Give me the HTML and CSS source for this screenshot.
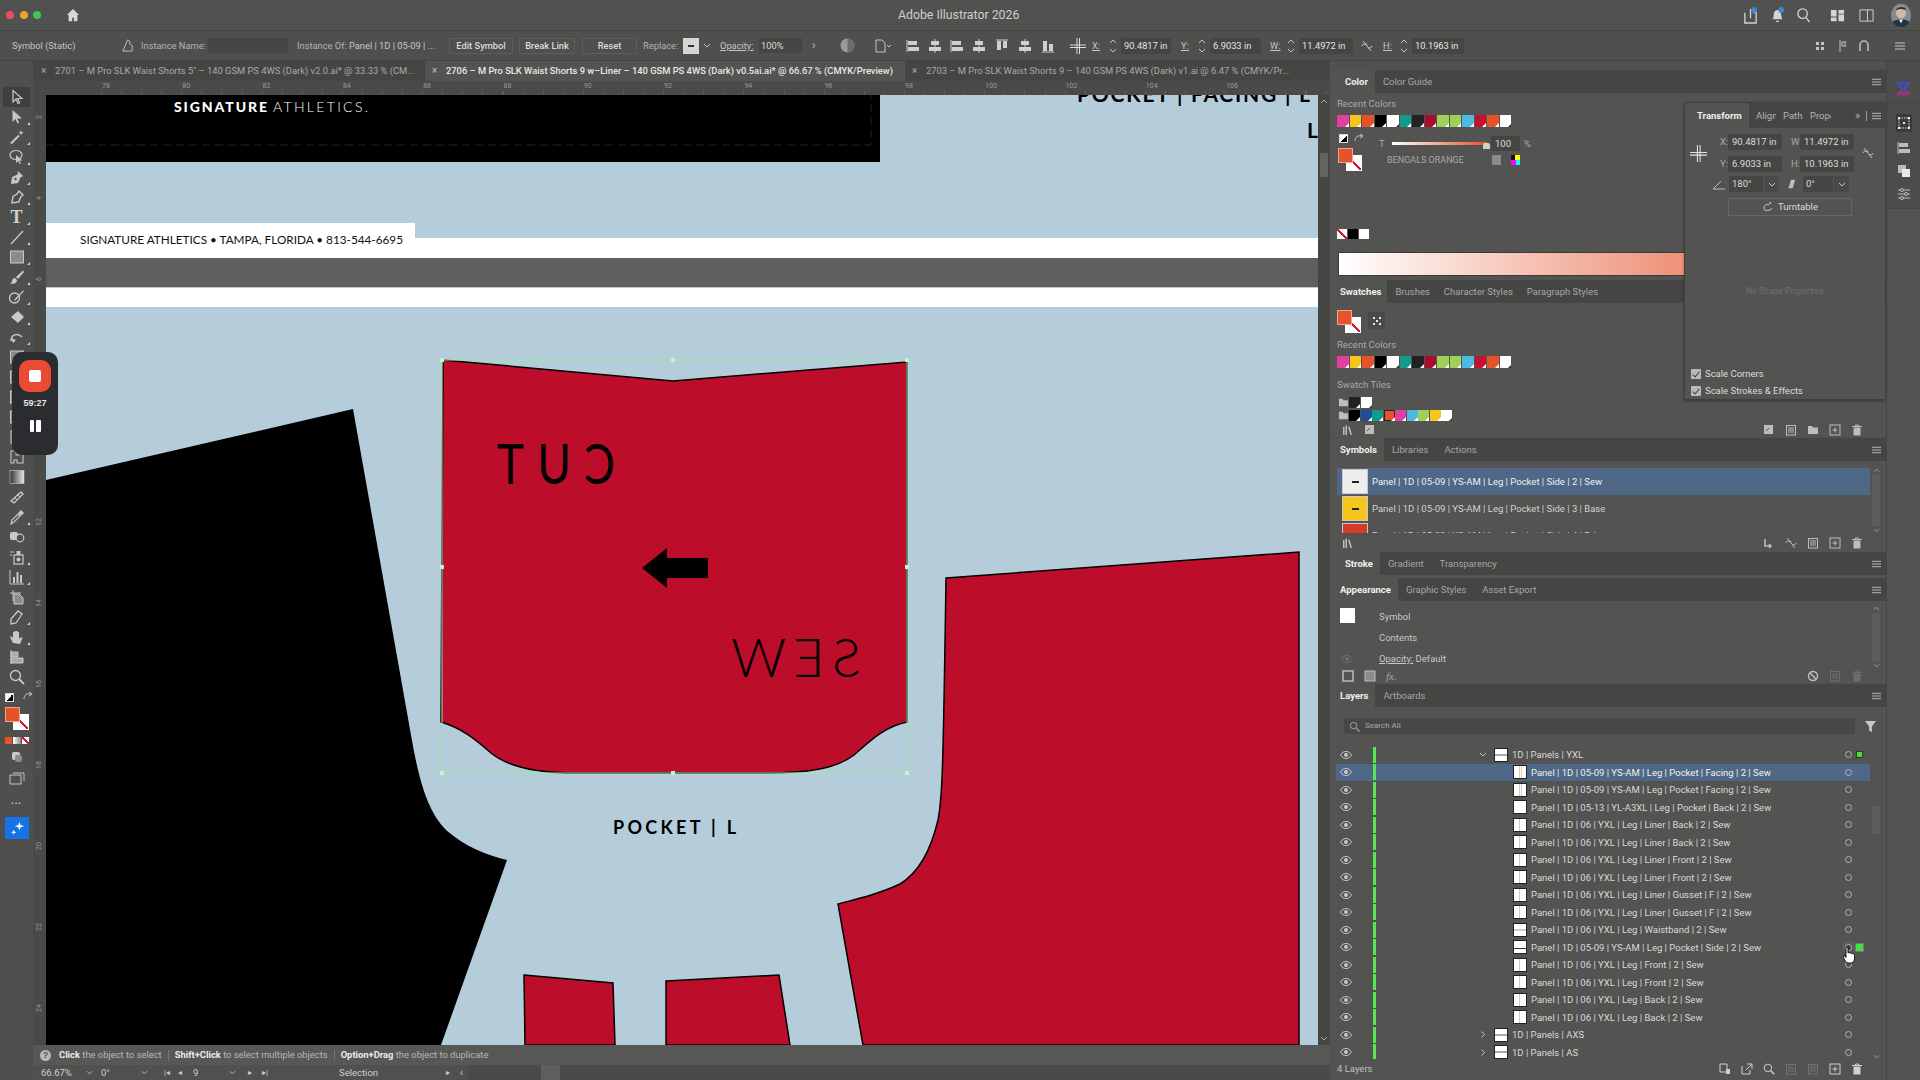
FILE: index.html
```html
<!DOCTYPE html>
<html lang="en">
<head>
<meta charset="utf-8">
<title>Adobe Illustrator 2026</title>
<link rel="stylesheet" href="styles.css">
</head>
<body>
<svg class="sprite" width="0" height="0" aria-hidden="true">
  <symbol id="i-sel" viewBox="0 0 16 16"><path d="M4 1.500V13l3-3 2 4.500 1.600-.8-2-4.200H13z" fill="none" stroke="currentColor" stroke-width="1.200"/></symbol>
  <symbol id="i-dir" viewBox="0 0 16 16"><path d="M3.500 1V13l3-3 2 4.500 1.600-.8-2-4.200H13z" fill="currentColor"/></symbol>
  <symbol id="i-wand" viewBox="0 0 16 16"><path d="M2 14.500 10 6.500" stroke="currentColor" stroke-width="2"/><path d="M12 1l.7 2 2 .7-2 .7-.7 2-.7-2-2-.7 2-.7z" fill="currentColor"/></symbol>
  <symbol id="i-lasso" viewBox="0 0 16 16"><ellipse cx="7" cy="6" rx="6" ry="4.500" fill="none" stroke="currentColor" stroke-width="1.200"/><path d="M7 6v8l2.200-2 1.600 3 1.200-.6-1.500-3h3z" fill="currentColor"/></symbol>
  <symbol id="i-pen" viewBox="0 0 16 16"><path d="M9 2l5 5-2.500 1.500L9 14l-7 1 1-7 5.500-2.500z" fill="currentColor"/><circle cx="6.500" cy="10" r="1.200" fill="#4f4f4d"/></symbol>
  <symbol id="i-curve" viewBox="0 0 16 16"><path d="M10 2l4 4-2 1.500L9.500 13 3 14l1-6.500L8 5z" fill="none" stroke="currentColor" stroke-width="1.400"/></symbol>
  <symbol id="i-line" viewBox="0 0 16 16"><path d="M2 15 14 2" stroke="currentColor" stroke-width="1.300"/></symbol>
  <symbol id="i-rect" viewBox="0 0 16 16"><rect x="1.500" y="2" width="13" height="12" fill="#8b8b89" stroke="currentColor" stroke-width="1"/></symbol>
  <symbol id="i-brush" viewBox="0 0 16 16"><path d="M14 1.500 7 8l2 2 6-7zM6 9c-2 0-3 1.500-3 3s-1 2-2 2.500c3 1 7 0 7-3.500z" fill="currentColor"/></symbol>
  <symbol id="i-shaper" viewBox="0 0 16 16"><circle cx="5.500" cy="9" r="5" fill="none" stroke="currentColor" stroke-width="1.300"/><path d="M15 2 7 11l-2 1 .8-2L14 1.500z" fill="currentColor"/></symbol>
  <symbol id="i-erase" viewBox="0 0 16 16"><path d="M9 2l6 6-6 6-7-6z" fill="currentColor"/></symbol>
  <symbol id="i-rot" viewBox="0 0 16 16"><path d="M2 12C2 6 8 3 13 8" fill="none" stroke="currentColor" stroke-width="1.500"/><path d="M2 9l2 5 3-3z" fill="currentColor"/></symbol>
  <symbol id="i-warp" viewBox="0 0 16 16"><path d="M2 2h5v4h3V3l4 2v9H8v-3H5v3H2z" fill="none" stroke="currentColor" stroke-width="1.100"/></symbol>
  <symbol id="i-grad" viewBox="0 0 16 16"><defs><linearGradient id="gd"><stop offset="0" stop-color="#333"/><stop offset="1" stop-color="#e8e8e8"/></linearGradient></defs><rect x="1" y="1.500" width="14" height="13" fill="url(#gd)" stroke="currentColor" stroke-width=".6"/></symbol>
  <symbol id="i-mesh" viewBox="0 0 16 16"><path d="M2 12 12 3l2 2-9 9z" fill="none" stroke="currentColor" stroke-width="1.300"/><path d="M5 8l3 3M8 5l3 3" stroke="currentColor"/></symbol>
  <symbol id="i-drop" viewBox="0 0 16 16"><path d="M2 15l1-4 6-6 2 2-6 6z" fill="none" stroke="currentColor" stroke-width="1.200"/><path d="M9 4l3-3 3 3-3 3z" fill="currentColor"/></symbol>
  <symbol id="i-blend" viewBox="0 0 16 16"><rect x="1" y="3" width="8" height="8" rx="2" fill="currentColor"/><circle cx="11" cy="9" r="3.800" fill="#4f4f4d" stroke="currentColor" stroke-width="1.200"/></symbol>
  <symbol id="i-spray" viewBox="0 0 16 16"><rect x="5" y="6" width="9" height="9" fill="none" stroke="currentColor" stroke-width="1.200"/><circle cx="9.500" cy="10.500" r="2" fill="currentColor"/><rect x="7.500" y="2" width="4" height="4" fill="currentColor"/><path d="M1 3h4M1 6h2" stroke="currentColor"/></symbol>
  <symbol id="i-chart" viewBox="0 0 16 16"><path d="M1 1v14h14" fill="none" stroke="currentColor"/><path d="M4 14V8h2v6zM7.500 14V3h2v11zM11 14V6h2v8z" fill="currentColor"/></symbol>
  <symbol id="i-board" viewBox="0 0 16 16"><path d="M1 4h11M4 1v11" stroke="currentColor"/><path d="M5 5h5l4 4v6H5z" fill="#8b8b89" stroke="currentColor"/></symbol>
  <symbol id="i-slice" viewBox="0 0 16 16"><path d="M2 15V10L9 2l4 3-6 9z" fill="none" stroke="currentColor" stroke-width="1.300"/></symbol>
  <symbol id="i-hand" viewBox="0 0 16 16"><path d="M4 14 1 8l1-1 2 2V3h1.500v5-6H7v6-6h1.500v6-5H10v7l2-2 1.500 1L11 15z" fill="currentColor"/></symbol>
  <symbol id="i-print" viewBox="0 0 16 16"><path d="M2 1v14M2 3h7v5H2zM2 9h12v5H2z" fill="#aaa" stroke="currentColor"/></symbol>
  <symbol id="i-zoom" viewBox="0 0 16 16"><circle cx="6.500" cy="6.500" r="5" fill="none" stroke="currentColor" stroke-width="1.300"/><path d="M10 10l5 5" stroke="currentColor" stroke-width="1.800"/></symbol>
  <symbol id="i-eye" viewBox="0 0 12 8"><path d="M.5 4C2.500 1 4 .5 6 .5s3.500.5 5.500 3.500C9.500 7 8 7.500 6 7.500S2.500 7 .5 4z" fill="none" stroke="currentColor"/><circle cx="6" cy="4" r="2" fill="currentColor"/></symbol>
  <symbol id="i-new" viewBox="0 0 12 12"><rect x="1" y="1" width="10" height="10" fill="none" stroke="currentColor"/><path d="M6 3.500v5M3.500 6h5" stroke="currentColor"/></symbol>
  <symbol id="i-trash" viewBox="0 0 12 12"><path d="M1 2.500h10M4.500 2.500v-1.500h3v1.500" stroke="currentColor" fill="none"/><path d="M2.500 3.500h7v8h-7z" fill="currentColor"/></symbol>
  <symbol id="i-folder" viewBox="0 0 12 12"><path d="M1 2h4l1 1.500h5V10H1z" fill="currentColor"/></symbol>
  <symbol id="i-lib" viewBox="0 0 12 12"><path d="M2 11V3h1.500v8zM4.500 11V1.500H6V11zM7 3l1.500-.5L11 10.500 9.500 11z" fill="currentColor"/></symbol>
  <symbol id="i-list" viewBox="0 0 12 12"><rect x="1.500" y="1.500" width="9" height="9.500" fill="none" stroke="currentColor"/><path d="M3 4h6M3 6h6M3 8h6" stroke="currentColor"/></symbol>
  <symbol id="i-swopt" viewBox="0 0 12 12"><rect x="1" y="1" width="9" height="9" fill="currentColor"/><path d="M3 7l3-3" stroke="#535351"/></symbol>
  <symbol id="i-link" viewBox="0 0 12 12"><path d="M1 6c0-2 3-2 4-2s1 1 1 1M11 6c0 2-3 2-4 2M2 1l8 10" stroke="currentColor" fill="none"/></symbol>
  <symbol id="i-none" viewBox="0 0 12 12"><circle cx="6" cy="6" r="4.500" fill="none" stroke="currentColor" stroke-width="1.500"/><path d="M3 3l6 6" stroke="currentColor" stroke-width="1.500"/></symbol>
  <symbol id="i-cross" viewBox="0 0 16 16"><path d="M0 7h16M0 9.500h16M7 0v16M9.500 0v16" stroke="currentColor" stroke-width="1"/></symbol>
  <symbol id="i-chev" viewBox="0 0 8 5"><path d="M1 1l3 3 3-3" fill="none" stroke="currentColor"/></symbol>
  <symbol id="i-menu" viewBox="0 0 10 8"><path d="M0 1h10M0 4h10M0 7h10" stroke="currentColor"/></symbol>
  <symbol id="i-step" viewBox="0 0 8 16"><path d="M1 5l3-3 3 3M1 11l3 3 3-3" fill="none" stroke="currentColor"/></symbol>
  <symbol id="i-al1" viewBox="0 0 14 14"><path d="M1 1v12" stroke="currentColor"/><rect x="2" y="2" width="9" height="4" fill="currentColor"/><rect x="2" y="8" width="11" height="4" fill="currentColor"/></symbol>
  <symbol id="i-al2" viewBox="0 0 14 14"><path d="M7 0v14" stroke="currentColor"/><rect x="3" y="2" width="8" height="4" fill="currentColor"/><rect x="1" y="8" width="12" height="4" fill="currentColor"/></symbol>
  <symbol id="i-al3" viewBox="0 0 14 14"><path d="M1 1h12" stroke="currentColor"/><rect x="2" y="2" width="4" height="9" fill="currentColor"/><rect x="8" y="2" width="4" height="7" fill="currentColor"/></symbol>
  <symbol id="i-al4" viewBox="0 0 14 14"><path d="M1 13h12" stroke="currentColor"/><rect x="2" y="2" width="4" height="10" fill="currentColor"/><rect x="8" y="5" width="4" height="7" fill="currentColor"/></symbol>
</svg>

<div class="app">
  <header class="titlebar">
    <div class="lights"><i class="light red"></i><i class="light yellow"></i><i class="light green"></i></div>
    <svg class="home" viewBox="0 0 16 16"><path d="M8 1 1 8h2v7h4v-4h2v4h4V8h2z"/></svg>
    <span class="apptitle">Adobe Illustrator 2026</span>
    <div class="titleicons">
      <svg class="ticon" viewBox="0 0 16 18"><path d="M2 6v11h12V6h-3M8 12V2" fill="none" stroke="currentColor" stroke-width="1.400"/><circle cx="12" cy="3" r="3" fill="#3f86d8"/></svg>
      <svg class="ticon" viewBox="0 0 16 18"><path d="M8 3c-3 0-4 3-4 6l-1 4h10l-1-4c0-3-1-6-4-6zM6.500 14.500h3V16h-3z" fill="currentColor"/><circle cx="12" cy="3" r="3" fill="#3f86d8"/></svg>
      <svg class="ticon" viewBox="0 0 16 18"><circle cx="7" cy="7" r="5" fill="none" stroke="currentColor" stroke-width="1.400"/><path d="M10.500 11l4 5" stroke="currentColor" stroke-width="1.400"/></svg>
      <svg class="ticon" viewBox="0 0 16 18"><path d="M1 3h6v7H1zM9 3h6v4H9zM1 11h6v4H1zM9 8h6v7H9z" fill="currentColor"/></svg>
      <svg class="ticon" viewBox="0 0 16 18"><path d="M1 3h14v12H1zM9 3v12" fill="none" stroke="currentColor"/></svg>
      <svg class="avatar" viewBox="0 0 22 24"><clipPath id="av"><ellipse cx="11" cy="12" rx="10" ry="12"/></clipPath><g clip-path="url(#av)"><rect width="22" height="24" fill="#7f8c95"/><path d="M0 24c0-6 5-8 11-8s11 2 11 8z" fill="#233245"/><ellipse cx="11" cy="9" rx="5" ry="6" fill="#d7b8a2"/><path d="M6 7c0-4 10-5 10 0-3-2-7-2-10 0z" fill="#3a2c25"/><path d="M9 16h4l-2 4z" fill="#e8e8e8"/></g></svg>
    </div>
  </header>

  <div class="optionbar">
    <span class="ob-name">Symbol (Static)</span>
    <svg class="ob-ic1" viewBox="0 0 14 16"><path d="M2 14l5-12 3 2-1 2 3 2v6z" fill="none" stroke="currentColor"/></svg>
    <span class="ob-inst">Instance Name:</span>
    <span class="field ob-f1"></span>
    <span class="ob-of">Instance Of: <b>Panel | 1D | 05-09 | ...</b></span>
    <span class="obtn b1">Edit Symbol</span>
    <span class="obtn b2">Break Link</span>
    <span class="obtn b3">Reset</span>
    <span class="ob-rep">Replace:</span>
    <span class="ob-swatch"><i></i></span>
    <svg class="chev ob-ch" viewBox="0 0 8 5"><use href="#i-chev"/></svg>
    <span class="ob-op">Opacity:</span>
    <span class="field ob-f2">100%</span>
    <span class="ob-gt">&#8250;</span>
    <svg class="ob-globe" viewBox="0 0 14 14"><circle cx="7" cy="7" r="6.500" fill="#9a9a98"/><path d="M7 .5a6.500 6.500 0 0 1 0 13z" fill="#6b6b69"/></svg>
    <svg class="ob-doc" viewBox="0 0 16 14"><path d="M1 1h6l3 3v9H1z" fill="none" stroke="currentColor"/><path d="M12 6l2 2 2-2" fill="none" stroke="currentColor"/></svg>
    <svg class="ali a1"><use href="#i-al1"/></svg>
    <svg class="ali a2"><use href="#i-al2"/></svg>
    <svg class="ali a2b"><use href="#i-al1"/></svg>
    <svg class="ali a2c"><use href="#i-al2"/></svg>
    <svg class="ali a3"><use href="#i-al3"/></svg>
    <svg class="ali a4"><use href="#i-al2"/></svg>
    <svg class="ali a5"><use href="#i-al4"/></svg>
    <svg class="ob-cross"><use href="#i-cross"/></svg>
    <u class="ob-l lx">X:</u><svg class="step"><use href="#i-step"/></svg><span class="field ob-xy w50">90.4817 in</span>
    <u class="ob-l ly">Y:</u><svg class="step"><use href="#i-step"/></svg><span class="field ob-xy w51">6.9033 in</span>
    <u class="ob-l lw">W:</u><svg class="step"><use href="#i-step"/></svg><span class="field ob-xy w54">11.4972 in</span>
    <svg class="ob-link"><use href="#i-link"/></svg>
    <u class="ob-l lh">H:</u><svg class="step"><use href="#i-step"/></svg><span class="field ob-xy w52">10.1963 in</span>
    <div class="ob-right">
      <svg viewBox="0 0 12 12"><path d="M2 2h3v3H2zM7 2h3v3H7zM2 7h3v3H2zM7 7h3v3H7z" fill="currentColor"/></svg>
      <svg viewBox="0 0 12 12"><path d="M4 0v12M6 2h4l-1.500 2L10 6H6z" fill="none" stroke="currentColor"/></svg>
      <svg viewBox="0 0 12 12"><path d="M2 11V5a4 4 0 0 1 8 0v6" fill="none" stroke="currentColor" stroke-width="1.500"/></svg>
      <svg class="ob-menu" viewBox="0 0 12 12"><path d="M1 3h10M1 6h10M1 9h10" stroke="currentColor"/></svg>
    </div>
  </div>

  <div class="workspace">
    <nav class="tools">
      <span class="tool active"><svg><use href="#i-sel"/></svg></span>
      <span class="tool more"><svg><use href="#i-dir"/></svg></span>
      <span class="tool more"><svg><use href="#i-wand"/></svg></span>
      <span class="tool more"><svg><use href="#i-lasso"/></svg></span>
      <span class="tool more"><svg><use href="#i-pen"/></svg></span>
      <span class="tool more"><svg><use href="#i-curve"/></svg></span>
      <span class="tool more tool-t">T</span>
      <span class="tool more"><svg><use href="#i-line"/></svg></span>
      <span class="tool more"><svg><use href="#i-rect"/></svg></span>
      <span class="tool more"><svg><use href="#i-brush"/></svg></span>
      <span class="tool more"><svg><use href="#i-shaper"/></svg></span>
      <span class="tool more"><svg><use href="#i-erase"/></svg></span>
      <span class="tool more"><svg><use href="#i-rot"/></svg></span>
      <span class="tool more"><svg><use href="#i-rect"/></svg></span>
      <span class="tool more"><svg><use href="#i-rect"/></svg></span>
      <span class="tool more"><svg><use href="#i-rect"/></svg></span>
      <span class="tool more"><svg><use href="#i-rect"/></svg></span>
      <span class="tool more"><svg><use href="#i-warp"/></svg></span>
      <span class="tool"><svg><use href="#i-warp"/></svg></span>
      <span class="tool"><svg><use href="#i-grad"/></svg></span>
      <span class="tool"><svg><use href="#i-mesh"/></svg></span>
      <span class="tool more"><svg><use href="#i-drop"/></svg></span>
      <span class="tool"><svg><use href="#i-blend"/></svg></span>
      <span class="tool more"><svg><use href="#i-spray"/></svg></span>
      <span class="tool more"><svg><use href="#i-chart"/></svg></span>
      <span class="tool"><svg><use href="#i-board"/></svg></span>
      <span class="tool more"><svg><use href="#i-slice"/></svg></span>
      <span class="tool more"><svg><use href="#i-hand"/></svg></span>
      <span class="tool"><svg><use href="#i-print"/></svg></span>
      <span class="tool"><svg><use href="#i-zoom"/></svg></span>
      <div class="tool-swap"><i class="mini-def"></i><svg viewBox="0 0 10 10"><path d="M1 7c0-4 3-6 7-5M6 0l3 2-3 2" fill="none" stroke="currentColor"/></svg></div>
      <div class="fs tool-fs"><i class="fs-stroke"></i><i class="fs-fill"></i></div>
      <div class="tool-modes"><i class="m-o"></i><i class="m-g"></i><i class="m-n"></i></div>
      <span class="tool small s1"><svg viewBox="0 0 16 16"><rect x="3" y="3" width="8" height="8" rx="2" fill="currentColor"/><rect x="6" y="6" width="7" height="7" rx="2" fill="#8b8b89"/></svg></span>
      <span class="tool small s2"><svg viewBox="0 0 16 16"><path d="M1 5h11v9H1zM4 3h11v8" fill="none" stroke="currentColor"/></svg></span>
      <span class="tool-dots">&#8226;&#8226;&#8226;</span>
      <span class="tool-ai"><svg viewBox="0 0 16 16"><path d="M10 1l1.200 3.300L15 5.500l-3.800 1.200L10 10 8.800 6.700 5 5.500l3.800-1.200zM4 9l.7 2.200L7 12l-2.300.8L4 15l-.7-2.200L1 12l2.300-.8z" fill="#fff"/></svg></span>
    </nav>

    <div class="recorder">
      <span class="rec-btn"><i></i></span>
      <span class="rec-time">59:27</span>
      <span class="rec-pause"><i></i><i></i></span>
    </div>

    <main class="doc">
      <div class="tabs">
        <div class="doctab"><span class="x">&#215;</span><span class="tabtext">2701 – M Pro SLK Waist Shorts 5" – 140 GSM PS 4WS (Dark) v2.0.ai* @ 33.33 % (CM...</span></div>
        <div class="doctab on"><span class="x">&#215;</span><span class="tabtext">2706 – M Pro SLK Waist Shorts 9 w–Liner – 140 GSM PS 4WS (Dark) v0.5ai.ai* @ 66.67 % (CMYK/Preview)</span></div>
        <div class="doctab"><span class="x">&#215;</span><span class="tabtext">2703 – M Pro SLK Waist Shorts 9 – 140 GSM PS 4WS (Dark) v1.ai @ 6.47 % (CMYK/Pr...</span></div>
      </div>
      <div class="ruler-h">
        <span>78</span><span>80</span><span>82</span><span>84</span><span>86</span><span>88</span><span>90</span><span>92</span><span>94</span><span>96</span><span>98</span><span>100</span><span>102</span><span>104</span><span>106</span>
      </div>
      <div class="mid">
        <div class="ruler-v">
          <span>2</span><span>4</span><span>6</span><span>8</span><span>10</span><span>12</span><span>14</span><span>16</span><span>18</span><span>20</span><span>22</span><span>24</span>
        </div>
        <svg class="canvas" viewBox="0 0 1272 950" preserveAspectRatio="none">
          <rect class="c-blue" width="1272" height="950"/>
          <rect x="0" y="0" width="834" height="67"/>
          <path d="M0 50H825V0" class="c-dash"/>
          <text x="128" y="17" class="c-logo c-b" textLength="93" lengthAdjust="spacing">SIGNATURE</text>
          <text x="227" y="17" class="c-logo c-thin" textLength="95" lengthAdjust="spacing">ATHLETICS.</text>
          <rect class="c-white" x="0" y="128" width="369" height="35"/>
          <rect class="c-white" x="0" y="143" width="1272" height="20"/>
          <rect class="c-gray" x="0" y="163" width="1272" height="29"/>
          <rect class="c-white" x="0" y="193" width="1272" height="19"/>
          <text x="34" y="149" class="c-addr" textLength="323" lengthAdjust="spacingAndGlyphs">SIGNATURE ATHLETICS • TAMPA, FLORIDA • 813-544-6695</text>

          <text x="1031" y="7" class="c-label c-big" textLength="233" lengthAdjust="spacing">POCKET | FACING | L</text>
          <text x="1261" y="43" class="c-label c-big">L</text>

          <path d="M0 385 307 314 365 640C372 680 380 715 400 735 420 752 440 760 461 765L395 950H0Z"/>
          <path class="c-red" d="M900 483 1253 457V950H817L792 809C815 803 835 798 854 789 872 778 885 755 892 725 896 705 897 690 900 483Z"/>
          <path class="c-red" d="M478 880 567 888 569 950H479Z"/>
          <path class="c-red" d="M620 886 733 880 744 950H620Z"/>
          <path class="c-red" d="M397 265 627 286 861 267V627C838 632 825 645 808 660 790 674 760 678 720 678H530C490 678 462 672 445 658 428 643 415 633 395 627Z"/>
          <g transform="translate(569 389) scale(-.82 1)"><text class="c-cut" textLength="144" lengthAdjust="spacing">CUT</text></g>
          <g transform="translate(815 582) scale(-1 1)"><text class="c-cut c-sew" textLength="130" lengthAdjust="spacing">SEW</text></g>
          <path d="M596 473 621 453V463H662V483H621V493Z"/>
          <text x="567" y="739" class="c-label c-mid" textLength="123" lengthAdjust="spacing">POCKET | L</text>

          <rect class="c-sel" x="396" y="265" width="465" height="413"/>
          <path class="c-h" d="M394 263h4v4h-4zM625 263h4v4h-4zM859 263h4v4h-4zM394 470h4v4h-4zM859 470h4v4h-4zM394 676h4v4h-4zM625 676h4v4h-4zM859 676h4v4h-4z"/>
        </svg>
        <div class="vscroll"><svg class="vs-up" viewBox="0 0 8 5"><path d="M1 4l3-3 3 3" fill="none" stroke="currentColor"/></svg><i class="vs-thumb"></i><svg class="vs-dn" viewBox="0 0 8 5"><use href="#i-chev"/></svg></div>
      </div>
      <div class="hint">
        <span class="hint-q">?</span>
        <span><b>Click</b> the object to select</span><i class="hint-sep"></i>
        <span><b>Shift+Click</b> to select multiple objects</span><i class="hint-sep"></i>
        <span><b>Option+Drag</b> the object to duplicate</span>
      </div>
      <div class="bottombar">
        <span class="bb bb-zoom">66.67%</span><svg class="chev"><use href="#i-chev"/></svg>
        <span class="bb bb-rot">0°</span><svg class="chev"><use href="#i-chev"/></svg>
        <span class="bb bb-nav bb-first">|&#9666;</span><span class="bb bb-nav">&#9666;</span>
        <span class="bb bb-page">9</span><svg class="chev"><use href="#i-chev"/></svg>
        <span class="bb bb-nav bb-next">&#9656;</span><span class="bb bb-nav">&#9656;|</span>
        <span class="bb bb-sel">Selection</span>
        <span class="bb bb-arrow">&#9656;</span><span class="bb bb-arrow2">&#8249;</span>
        <div class="hscroll"><i></i></div>
      </div>
    </main>

    <div class="dock">
      <section class="panel pn-color">
        <div class="ph"><span class="tab on ind">Color</span><span class="tab">Color Guide</span><svg class="menu"><use href="#i-menu"/></svg></div>
        <div class="pb">
          <div class="lbl">Recent Colors</div>
          <div class="swrow">
            <i class="sw pink"></i><i class="sw yel"></i><i class="sw ora"></i><i class="sw blk"></i><i class="sw wht"></i><i class="sw teal"></i><i class="sw drk"></i><i class="sw mar"></i><i class="sw lime"></i><i class="sw lime"></i><i class="sw sky"></i><i class="sw red"></i><i class="sw ora"></i><i class="sw wht"></i>
          </div>
          <div class="ctl">
            <div class="ctl-left">
              <div class="ctl-mini"><i class="mini-def"></i><svg viewBox="0 0 10 10"><path d="M1 7c0-4 3-6 7-5M6 0l3 2-3 2" fill="none" stroke="currentColor"/></svg></div>
              <div class="fs"><i class="fs-stroke"></i><i class="fs-fill"></i></div>
            </div>
            <div class="ctl-right">
              <div class="tint"><span class="tint-t">T</span><span class="slider"><i></i></span><span class="field tint-f">100</span><span class="tint-p">%</span></div>
              <div class="spot"><span class="spot-n">BENGALS ORANGE</span><i class="spot-g"></i><i class="spot-c"></i></div>
            </div>
          </div>
          <div class="nbw"><i class="nbw-n"></i><i class="nbw-b"></i><i class="nbw-w"></i></div>
          <div class="spectrum"></div>
        </div>
      </section>

      <section class="panel pn-swatch">
        <div class="ph"><span class="tab on">Swatches</span><span class="tab">Brushes</span><span class="tab">Character Styles</span><span class="tab">Paragraph Styles</span></div>
        <div class="pb">
          <div class="sw-top"><div class="fs"><i class="fs-stroke"></i><i class="fs-fill"></i></div><span class="sw-grid"><svg viewBox="0 0 12 12"><path d="M2 2h2v2H2zM8 2h2v2H8zM5 5h2v2H5zM2 8h2v2H2zM8 8h2v2H8z" fill="#e8e8e6"/></svg></span></div>
          <div class="lbl lbl2">Recent Colors</div>
          <div class="swrow">
            <i class="sw pink"></i><i class="sw yel"></i><i class="sw ora"></i><i class="sw blk"></i><i class="sw wht"></i><i class="sw teal"></i><i class="sw drk"></i><i class="sw mar"></i><i class="sw lime"></i><i class="sw lime"></i><i class="sw sky"></i><i class="sw red"></i><i class="sw ora"></i><i class="sw wht"></i>
          </div>
          <div class="lbl lbl3">Swatch Tiles</div>
          <div class="tiles"><svg class="fold"><use href="#i-folder"/></svg><i class="sw sm drk"></i><i class="sw sm wht"></i></div>
          <div class="tiles"><svg class="fold"><use href="#i-folder"/></svg><i class="sw sm blk"></i><i class="sw sm navy"></i><i class="sw sm teal"></i><i class="sw sm ora cur"></i><i class="sw sm pink"></i><i class="sw sm sky"></i><i class="sw sm lime"></i><i class="sw sm yel"></i><i class="sw sm wht"></i></div>
          <div class="iconbar ib-sw">
            <svg><use href="#i-lib"/></svg><svg class="ib-g2"><use href="#i-swopt"/></svg>
            <span class="ib-r"><svg><use href="#i-swopt"/></svg><svg><use href="#i-list"/></svg><svg><use href="#i-folder"/></svg><svg><use href="#i-new"/></svg><svg><use href="#i-trash"/></svg></span>
          </div>
        </div>
      </section>

      <section class="panel pn-sym">
        <div class="ph"><span class="tab on">Symbols</span><span class="tab">Libraries</span><span class="tab">Actions</span><svg class="menu"><use href="#i-menu"/></svg></div>
        <div class="pb">
          <div class="symlist">
            <div class="symrows">
              <div class="symrow sel"><span class="symth th-w"><i></i></span><span>Panel | 1D | 05-09 | YS-AM | Leg | Pocket | Side | 2 | Sew</span></div>
              <div class="symrow"><span class="symth th-y"><i></i></span><span>Panel | 1D | 05-09 | YS-AM | Leg | Pocket | Side | 3 | Base</span></div>
              <div class="symrow"><span class="symth th-r"></span><span>Panel | 1D | 05-09 | YS-AM | Leg | Pocket | Side | 4 | Print</span></div>
            </div>
            <div class="sbar"><svg class="s-a" viewBox="0 0 8 5"><path d="M1 4l3-3 3 3" fill="none" stroke="currentColor"/></svg><i class="s-t st-sym"></i><svg class="s-a" viewBox="0 0 8 5"><use href="#i-chev"/></svg></div>
          </div>
          <div class="iconbar ib-sym">
            <svg><use href="#i-lib"/></svg>
            <span class="ib-r"><svg viewBox="0 0 12 12"><path d="M2 2v7h6M6 7l2 2-2 2" fill="none" stroke="currentColor" stroke-width="1.500"/></svg><svg><use href="#i-link"/></svg><svg><use href="#i-list"/></svg><svg><use href="#i-new"/></svg><svg><use href="#i-trash"/></svg></span>
          </div>
        </div>
      </section>

      <section class="panel pn-stroke">
        <div class="ph"><span class="tab on ind">Stroke</span><span class="tab">Gradient</span><span class="tab">Transparency</span><svg class="menu"><use href="#i-menu"/></svg></div>
      </section>

      <section class="panel pn-app">
        <div class="ph"><span class="tab on">Appearance</span><span class="tab">Graphic Styles</span><span class="tab">Asset Export</span><svg class="menu"><use href="#i-menu"/></svg></div>
        <div class="pb">
          <div class="applist">
            <div class="approws">
              <div class="approw"><i class="app-box"></i><span>Symbol</span></div>
              <div class="approw"><span>Contents</span></div>
              <div class="approw"><svg class="app-eye"><use href="#i-eye"/></svg><span><u>Opacity:</u> Default</span></div>
            </div>
            <div class="sbar"><svg class="s-a" viewBox="0 0 8 5"><path d="M1 4l3-3 3 3" fill="none" stroke="currentColor"/></svg><i class="s-t st-app"></i><svg class="s-a" viewBox="0 0 8 5"><use href="#i-chev"/></svg></div>
          </div>
          <div class="iconbar ib-app">
            <svg viewBox="0 0 12 12"><rect x="1" y="1" width="10" height="10" fill="none" stroke="currentColor" stroke-width="1.500"/></svg>
            <svg viewBox="0 0 12 12"><rect x="1" y="1" width="10" height="10" fill="#8b8b89" stroke="currentColor"/></svg>
            <em class="fx">fx.</em>
            <span class="ib-r"><svg><use href="#i-none"/></svg><svg class="dim"><use href="#i-list"/></svg><svg class="dim"><use href="#i-trash"/></svg></span>
          </div>
        </div>
      </section>

      <section class="panel pn-layers">
        <div class="ph"><span class="tab on">Layers</span><span class="tab">Artboards</span><svg class="menu"><use href="#i-menu"/></svg></div>
        <div class="pb">
          <div class="lsearch"><div class="lsearch-box"><svg viewBox="0 0 12 12"><circle cx="5" cy="5" r="3.500" fill="none" stroke="currentColor"/><path d="M8 8l3.500 3.500" stroke="currentColor" stroke-width="1.300"/></svg><span>Search All</span></div><svg class="funnel" viewBox="0 0 12 12"><path d="M0 0h12L7.500 6v6l-3-1.500V6z" fill="currentColor"/></svg></div>
          <div class="layerwrap">
            <div class="layers">
              <div class="lrow g"><svg class="eye"><use href="#i-eye"/></svg><i class="gbar"></i><svg class="lchev"><use href="#i-chev"/></svg><i class="th gt"></i><span class="lname">1D | Panels | YXL</span><i class="circ"></i><i class="tgt"></i></div>
              <div class="lrow s sel"><svg class="eye"><use href="#i-eye"/></svg><i class="gbar"></i><i class="th v1"></i><span class="lname">Panel | 1D | 05-09 | YS-AM | Leg | Pocket | Facing | 2 | Sew</span><i class="circ"></i></div>
              <div class="lrow s"><svg class="eye"><use href="#i-eye"/></svg><i class="gbar"></i><i class="th v1"></i><span class="lname">Panel | 1D | 05-09 | YS-AM | Leg | Pocket | Facing | 2 | Sew</span><i class="circ"></i></div>
              <div class="lrow s"><svg class="eye"><use href="#i-eye"/></svg><i class="gbar"></i><i class="th"></i><span class="lname">Panel | 1D | 05-13 | YL-A3XL | Leg | Pocket | Back | 2 | Sew</span><i class="circ"></i></div>
              <div class="lrow s"><svg class="eye"><use href="#i-eye"/></svg><i class="gbar"></i><i class="th v2"></i><span class="lname">Panel | 1D | 06 | YXL | Leg | Liner | Back | 2 | Sew</span><i class="circ"></i></div>
              <div class="lrow s"><svg class="eye"><use href="#i-eye"/></svg><i class="gbar"></i><i class="th v2"></i><span class="lname">Panel | 1D | 06 | YXL | Leg | Liner | Back | 2 | Sew</span><i class="circ"></i></div>
              <div class="lrow s"><svg class="eye"><use href="#i-eye"/></svg><i class="gbar"></i><i class="th v2"></i><span class="lname">Panel | 1D | 06 | YXL | Leg | Liner | Front | 2 | Sew</span><i class="circ"></i></div>
              <div class="lrow s"><svg class="eye"><use href="#i-eye"/></svg><i class="gbar"></i><i class="th v2"></i><span class="lname">Panel | 1D | 06 | YXL | Leg | Liner | Front | 2 | Sew</span><i class="circ"></i></div>
              <div class="lrow s"><svg class="eye"><use href="#i-eye"/></svg><i class="gbar"></i><i class="th v2"></i><span class="lname">Panel | 1D | 06 | YXL | Leg | Liner | Gusset | F | 2 | Sew</span><i class="circ"></i></div>
              <div class="lrow s"><svg class="eye"><use href="#i-eye"/></svg><i class="gbar"></i><i class="th v2"></i><span class="lname">Panel | 1D | 06 | YXL | Leg | Liner | Gusset | F | 2 | Sew</span><i class="circ"></i></div>
              <div class="lrow s"><svg class="eye"><use href="#i-eye"/></svg><i class="gbar"></i><i class="th h1"></i><span class="lname">Panel | 1D | 06 | YXL | Leg | Waistband | 2 | Sew</span><i class="circ"></i></div>
              <div class="lrow s"><svg class="eye"><use href="#i-eye"/></svg><i class="gbar"></i><i class="th d1"></i><span class="lname">Panel | 1D | 05-09 | YS-AM | Leg | Pocket | Side | 2 | Sew</span><i class="circ hov"></i><i class="tgt big"></i></div>
              <div class="lrow s"><svg class="eye"><use href="#i-eye"/></svg><i class="gbar"></i><i class="th v2"></i><span class="lname">Panel | 1D | 06 | YXL | Leg | Front | 2 | Sew</span><i class="circ"></i></div>
              <div class="lrow s"><svg class="eye"><use href="#i-eye"/></svg><i class="gbar"></i><i class="th v2"></i><span class="lname">Panel | 1D | 06 | YXL | Leg | Front | 2 | Sew</span><i class="circ"></i></div>
              <div class="lrow s"><svg class="eye"><use href="#i-eye"/></svg><i class="gbar"></i><i class="th v2"></i><span class="lname">Panel | 1D | 06 | YXL | Leg | Back | 2 | Sew</span><i class="circ"></i></div>
              <div class="lrow s"><svg class="eye"><use href="#i-eye"/></svg><i class="gbar"></i><i class="th v2"></i><span class="lname">Panel | 1D | 06 | YXL | Leg | Back | 2 | Sew</span><i class="circ"></i></div>
              <div class="lrow g"><svg class="eye"><use href="#i-eye"/></svg><i class="gbar"></i><svg class="lchev closed"><use href="#i-chev"/></svg><i class="th gt"></i><span class="lname">1D | Panels | AXS</span><i class="circ"></i></div>
              <div class="lrow g"><svg class="eye"><use href="#i-eye"/></svg><i class="gbar"></i><svg class="lchev closed"><use href="#i-chev"/></svg><i class="th gt"></i><span class="lname">1D | Panels | AS</span><i class="circ"></i></div>
              <svg class="cursor" viewBox="0 0 14 18"><path d="M4 1.500c1-.8 2 0 2 1V7c1-.6 2-.6 2.500.3 1-.5 1.800-.2 2.200.6 1-.2 1.800.4 1.800 1.600v3c0 2.500-1.500 4.500-4 4.500H6.500C4 17 3 15 1.500 11.500c-.5-1 .8-2 1.700-1L4 11.500z" fill="#fff" stroke="#000" stroke-width=".9"/></svg>
            </div>
            <div class="sbar sb-l"><i class="s-t st-lay"></i><svg class="s-a" viewBox="0 0 8 5"><use href="#i-chev"/></svg></div>
          </div>
          <div class="lfoot">
            <span class="lcount">4 Layers</span>
            <span class="ib-r"><svg viewBox="0 0 12 12"><path d="M1 1h7v8H1z" fill="none" stroke="currentColor"/><path d="M7 6h4v5H7z" fill="currentColor"/></svg><svg viewBox="0 0 12 12"><path d="M1 3v8h8V7M6 1h5v5M11 1 5 7" fill="none" stroke="currentColor"/></svg><svg><use href="#i-zoom"/></svg><svg class="dim"><use href="#i-list"/></svg><svg class="dim"><use href="#i-list"/></svg><svg><use href="#i-new"/></svg><svg><use href="#i-trash"/></svg></span>
          </div>
        </div>
      </section>

      <aside class="transform">
        <div class="tf-head"><span class="tf-tab on">Transform</span><span class="tf-tab t-a">Align</span><span class="tf-tab t-p">Path</span><span class="tf-tab t-r">Properties</span><span class="tf-more">&#187;</span><i class="tf-bar"></i><svg class="tf-menu"><use href="#i-menu"/></svg></div>
        <div class="tf-grid">
          <svg class="tf-ref"><use href="#i-cross"/></svg>
          <div class="tf-fields">
            <div class="tf-row"><span class="tf-l">X:</span><span class="field tf-f">90.4817 in</span><span class="tf-l l2">W:</span><span class="field tf-f">11.4972 in</span></div>
            <div class="tf-row"><span class="tf-l">Y:</span><span class="field tf-f">6.9033 in</span><span class="tf-l l2">H:</span><span class="field tf-f">10.1963 in</span></div>
          </div>
          <svg class="tf-link"><use href="#i-link"/></svg>
        </div>
        <div class="tf-row tf-ang">
          <svg class="tf-ai" viewBox="0 0 14 12"><path d="M13 11H1L9 3" fill="none" stroke="currentColor"/></svg><span class="field tf-s">180°</span><span class="tf-dd"><svg class="chev"><use href="#i-chev"/></svg></span>
          <svg class="tf-ai a2" viewBox="0 0 12 12"><path d="M3 11 6 1h5L8 11z" fill="currentColor"/></svg><span class="field tf-s s2">0°</span><span class="tf-dd"><svg class="chev"><use href="#i-chev"/></svg></span>
        </div>
        <div class="tf-turn"><svg viewBox="0 0 12 12"><path d="M8 4c-3-1-6 1-6 4s7 3 9 0" fill="none" stroke="currentColor"/><circle cx="9" cy="2" r="1" fill="currentColor"/></svg>Turntable</div>
        <div class="tf-none">No Shape Properties</div>
        <label class="tf-chk"><i></i>Scale Corners</label>
        <label class="tf-chk"><i></i>Scale Strokes &amp; Effects</label>
      </aside>
    </div>

    <aside class="strip">
      <div class="strip-top"><svg viewBox="0 0 16 16"><path d="M2 2h12L9 8l5 6H2l5-6z" fill="none" stroke="#3b52d8" stroke-width="2"/><path d="M1 11h14v3H1z" fill="#c6264f"/></svg></div>
      <div class="strip-sec">
        <span class="strip-on"><svg viewBox="0 0 14 14"><rect x="2" y="2" width="10" height="10" fill="none" stroke="#ddd" stroke-dasharray="1.500 1"/><path d="M1 1h2v2H1zM11 1h2v2h-2zM1 11h2v2H1zM11 11h2v2h-2zM6 6h2v2H6z" fill="#eee"/></svg></span>
        <svg class="st"><use href="#i-al1"/></svg>
        <svg class="st" viewBox="0 0 14 14"><path d="M1 1h8v8H1z" fill="#bbb"/><path d="M5 5h8v8H5z" fill="#e8e8e6"/></svg>
        <svg class="st" viewBox="0 0 14 14"><path d="M1 3h12M1 7h12M1 11h12" stroke="currentColor"/><circle cx="5" cy="3" r="1.500" fill="#535351" stroke="currentColor"/><circle cx="9" cy="7" r="1.500" fill="#535351" stroke="currentColor"/><circle cx="5" cy="11" r="1.500" fill="#535351" stroke="currentColor"/></svg>
      </div>
    </aside>
  </div>
</div>
</body>
</html>
```

FILE: styles.css
```css
* { box-sizing: border-box; }
html, body { margin: 0; padding: 0; }
body { width: 1920px; height: 1080px; overflow: hidden; background: #535351; font: 9.5px/1.2 Roboto, "Liberation Sans", sans-serif; color: #d0d0ce; white-space: nowrap; }
i, em, u { display: block; }
svg { display: block; flex: none; }
.sprite { position: absolute; }
.app { display: flex; flex-direction: column; width: 1920px; height: 1080px; }

/* title bar */
.titlebar { height: 31px; flex: none; background: #51514f; border-bottom: 1px solid #454543; display: flex; align-items: center; padding-left: 6px; position: relative; }
.lights { display: flex; gap: 5.500px; }
.light { width: 8px; height: 8px; border-radius: 50%; }
.light.red { background: #e8505f; }
.light.yellow { background: #e8a52a; }
.light.green { background: #3fc94c; }
.home { width: 14px; height: 14px; margin-left: 25px; fill: #d8d8d6; }
.apptitle { position: absolute; left: 898px; width: 110px; font-size: 12.300px; color: #cfcfcd; }
.titleicons { margin-left: auto; display: flex; align-items: center; padding-right: 8px; color: #d4d4d2; }
.ticon { width: 15px; height: 17px; }
.ticon:nth-child(1) { margin-right: 12px; }
.ticon:nth-child(2) { margin-right: 11px; }
.ticon:nth-child(3) { margin-right: 19px; }
.ticon:nth-child(4) { margin-right: 14px; }
.ticon:nth-child(5) { margin-right: 16px; }
.avatar { width: 22px; height: 25px; }

/* option bar */
.optionbar { height: 30px; flex: none; background: #4f4f4d; border-bottom: 1px solid #444442; display: flex; align-items: center; padding-left: 12px; color: #c4c4c2; font-size: 9.300px; }
.ob-name { width: 105px; }
.ob-ic1 { width: 13px; height: 15px; margin-right: 7px; margin-left: 4px; }
.ob-inst { width: 67px; color: #b4b4b2; }
.field { background: #454543; color: #dcdcda; display: flex; align-items: center; }
.ob-f1 { width: 80px; height: 15px; }
.ob-of { margin-left: 9px; width: 152px; color: #b4b4b2; }
.ob-of b { font-weight: 400; color: #c8c8c6; }
.obtn { height: 16px; display: flex; align-items: center; justify-content: center; border: 1px solid #5d5d5b; border-radius: 1px; color: #dcdcda; font-weight: 500; }
.b1 { width: 64px; }
.b2 { width: 56px; margin-left: 6px; }
.b3 { width: 55px; margin-left: 7px; }
.ob-rep { margin-left: 6px; width: 40px; color: #b4b4b2; }
.ob-swatch { width: 16px; height: 16px; background: #d5d5d3; display: flex; align-items: center; justify-content: center; }
.ob-swatch i { width: 6px; height: 2px; background: #333; }
.chev { width: 8px; height: 5px; color: #c4c4c2; }
.ob-ch { margin-left: 4px; }
.ob-op { margin-left: 9px; width: 39px; text-decoration: underline; }
.ob-f2 { width: 43px; height: 15px; padding-left: 2px; }
.ob-gt { margin-left: 10px; font-size: 12px; width: 28px; }
.ob-globe { width: 15px; height: 15px; }
.ob-doc { width: 16px; height: 14px; margin-left: 20px; }
.ali { width: 14px; height: 14px; color: #cfcfcd; margin-left: 9px; }
.a1 { margin-left: 15px; }
.a2 { margin-left: 8px; }
.a2b, .a2c { margin-left: 8px; }
.ob-cross { width: 16px; height: 16px; margin-left: 15px; color: #dcdcda; }
.ob-l { margin-left: 7px; width: 11px; }
.step { width: 8px; height: 16px; margin-left: 6px; margin-right: 4px; color: #c4c4c2; }
.ob-xy { height: 16px; padding-left: 3px; color: #e4e4e2; }
.w50 { width: 50px; }
.w51 { width: 51px; }
.w54 { width: 54px; }
.w52 { width: 52px; }
.lx { margin-left: 6px; }
.ly { margin-left: 10px; }
.lw { margin-left: 9px; }
.lh { margin-left: 12px; }
.ob-link { width: 12px; height: 12px; margin-left: 8px; margin-right: -2px; color: #c4c4c2; }
.ob-right { margin-left: auto; display: flex; align-items: center; gap: 10px; padding-right: 14px; }
.ob-right svg { width: 12px; height: 12px; }
.ob-right .ob-menu { margin-left: 14px; }

/* workspace */
.workspace { flex: 1; min-height: 0; display: flex; position: relative; }

/* tools */
.tools { width: 33px; flex: none; background: #4f4f4d; padding-top: 26px; display: flex; flex-direction: column; color: #c8c8c6; }
.tool { height: 20px; flex: none; display: flex; align-items: center; justify-content: center; position: relative; }
.tool svg { width: 16px; height: 16px; }
.tool.active { background: #3f3f3d; margin: 0 3px; }
.tool.more::after { content: ""; position: absolute; right: 3px; bottom: 2px; border-right: 3px solid #cfcfcd; border-top: 3px solid transparent; }
.tool-t { font: 700 18px/20px "Liberation Serif", serif; color: #d0d0ce; }
.tool-swap { display: flex; align-items: center; gap: 9px; height: 12px; margin: 4px 0 0 5px; }
.tool-swap svg, .ctl-mini svg { width: 10px; height: 10px; color: #c8c8c6; }
.mini-def { width: 9px; height: 9px; background: linear-gradient(135deg, #fff 50%, #000 50%); border: 1px solid #ddd; }
.fs { position: relative; width: 25px; height: 24px; flex: none; }
.fs-fill { position: absolute; left: 0; top: 0; width: 15px; height: 15px; background: #e4532a; border: 1px solid #efa58c; }
.fs-stroke { position: absolute; left: 8px; top: 7px; width: 16px; height: 16px; background: linear-gradient(to top right, #fff 44%, #d01c2c 44%, #d01c2c 56%, #fff 56%); box-shadow: inset 0 0 0 1px #fff; }
.tool-fs { margin: 4px 0 0 5px; }
.tool-modes { display: flex; gap: 1px; margin: 6px 0 0 5px; height: 7px; width: 24px; }
.m-o { flex: 1; background: #e4532a; }
.m-g { flex: 1; background: linear-gradient(90deg, #fff, #888); }
.m-n { flex: 1; background: linear-gradient(to top right, #fff 42%, #d01c2c 42%, #d01c2c 58%, #fff 58%); }
.tool.small { height: 19px; margin-top: 1px; }
.tool.s1 { margin-top: 3px; }
.tool.s2 { margin-top: 2px; }
.tool-dots { text-align: center; font-size: 8px; letter-spacing: 1px; color: #d0d0ce; height: 12px; margin-top: 12px; }
.tool-ai { width: 24px; height: 22px; margin: 6px 0 0 5px; background: #1473e6; display: flex; align-items: center; justify-content: center; }
.tool-ai svg { width: 15px; height: 15px; }

/* recorder overlay */
.recorder { position: absolute; left: 12px; top: 291px; width: 46px; height: 103px; background: #2a2c2f; border-radius: 10px; display: flex; flex-direction: column; align-items: center; padding-top: 8px; z-index: 5; }
.rec-btn { width: 32px; height: 32px; border-radius: 10px; background: #ea4b35; display: flex; align-items: center; justify-content: center; }
.rec-btn i { width: 12px; height: 12px; background: #fff; border-radius: 2px; }
.rec-time { margin-top: 5px; font: 700 9px/12px "Liberation Sans", sans-serif; color: #e4e6e8; }
.rec-pause { margin-top: 11px; display: flex; gap: 2px; }
.rec-pause i { width: 4.500px; height: 12px; background: #fff; border-radius: 1px; }

/* document */
.doc { width: 1297px; flex: none; display: flex; flex-direction: column; min-width: 0; }
.tabs { height: 20px; flex: none; display: flex; background: #454543; color: #a9a9a7; font-size: 9.350px; overflow: hidden; }
.doctab { display: flex; align-items: center; height: 100%; flex: none; }
.doctab:nth-child(1) { width: 392px; padding-left: 8px; }
.doctab.on { width: 480px; padding-left: 7px; background: #535351; color: #e8e8e6; font-weight: 500; }
.doctab:nth-child(3) { width: 385px; padding-left: 7px; }
.x { width: 14px; font-size: 10px; color: #a9a9a7; flex: none; }
.ruler-h { height: 14px; flex: none; background: #4a4a48 repeating-linear-gradient(90deg, #5e5e5c 0 1px, transparent 1px 20.075px) 55px 10px / 100% 4px no-repeat; display: flex; padding-left: 55px; font-size: 7px; color: #9a9a98; border-left: 13px solid #4a4a48; overflow: hidden; }
.ruler-h span { width: 80.300px; flex: none; padding: 1px 0 0 1px; }
.mid { height: 950px; flex: none; display: flex; }
.ruler-v { width: 13px; flex: none; background: #4a4a48; overflow: hidden; display: flex; flex-direction: column; font-size: 7px; color: #9a9a98; }
.ruler-v span { height: 81px; flex: none; display: flex; align-items: center; justify-content: center; writing-mode: vertical-rl; transform: rotate(180deg); }
.ruler-v span:first-child { margin-top: -18px; }
.canvas { width: 1272px; height: 950px; flex: none; }
.c-blue { fill: #b5cddb; }
.c-white { fill: #fff; }
.c-gray { fill: #5f605e; }
.c-dash { fill: none; stroke: #222; stroke-dasharray: 8 5; }
.c-logo { fill: #fff; font: 400 14px Lato, sans-serif; }
.c-b { font-weight: 900; }
.c-thin { font-weight: 300; }
.c-addr { font: 400 11.500px Lato, sans-serif; fill: #111; }
.c-label { font: 700 18px Lato, sans-serif; fill: #000; }
.c-big { font-size: 21px; }
.c-red { fill: #bc0e2a; stroke: #000; stroke-width: 1.500; }
.c-cut { font: 400 56px Lato, sans-serif; fill: #000; }
.c-sew { font-weight: 300; font-size: 54px; }
.c-sel { fill: none; stroke: #9be8a0; stroke-width: 1; }
.c-h { fill: #c8f5c8; }
.vscroll { width: 12px; flex: none; background: #454543; position: relative; color: #a9a9a7; padding: 4px 2px; display: flex; flex-direction: column; align-items: center; }
.vs-up, .vs-dn { width: 8px; height: 5px; }
.vs-thumb { width: 8px; height: 24px; margin-top: 49px; background: #636361; }
.vs-dn { margin-top: auto; }
.hint { height: 20px; flex: none; background: #575755; display: flex; align-items: center; padding-left: 7px; color: #b8b8b6; font-size: 9.400px; gap: 6px; }
.hint b { color: #ecece9; font-weight: 700; }
.hint-q { width: 11px; height: 11px; border-radius: 50%; background: #b8b8b6; color: #50504e; font: 700 9px/11px "Liberation Sans", sans-serif; text-align: center; margin-right: 2px; }
.hint-sep { width: 1px; height: 10px; background: #777775; }
.bottombar { height: 15px; flex: none; background: #50504e; display: flex; align-items: center; font-size: 9.500px; color: #cfcfcd; padding-left: 8px; }
.bb-zoom { width: 45px; }
.bb-rot { margin-left: 8px; width: 40px; }
.bottombar .chev { width: 7px; height: 5px; }
.bb-nav { font-size: 8px; width: 14px; }
.bb-first { margin-left: 16px; }
.bb-page { width: 36px; margin-left: 1px; }
.bb-next { margin-left: 12px; }
.bb-sel { margin-left: 63px; width: 107px; }
.bb-arrow { font-size: 8px; width: 14px; }
.bb-arrow2 { font-size: 10px; width: 6px; }
.hscroll { flex: 1; height: 100%; background: #4a4a48; margin-left: 2px; padding-left: 73px; }
.hscroll i { width: 19px; height: 100%; background: #5e5e5c; }

/* dock */
.dock { width: 553px; flex: none; margin-left: 3px; padding-top: 9px; display: flex; flex-direction: column; position: relative; background: #50504e; }
.panel { display: flex; flex-direction: column; background: #535351; flex: none; }
.ph { height: 23px; flex: none; background: #454543; display: flex; align-items: stretch; padding-right: 5px; color: #a8a8a6; font-size: 9.500px; position: relative; }
.tab { display: flex; align-items: center; padding: 0 7px; margin-right: 2px; }
.tab.on { background: #535351; color: #efefed; font-weight: 700; margin-right: 1px; }
.tab.ind { padding-left: 12px; }
.pn-swatch .tab { padding: 0 6px 0 7px; margin-right: 1px; }
.menu { width: 9px; height: 8px; margin: auto 0 auto auto; color: #c4c4c2; }
.pb { display: flex; flex-direction: column; padding-left: 4px; }
.pn-color { height: 210px; }
.pn-color .pb { flex: 1; }
.lbl { color: #a9a9a7; height: 12px; margin-top: 5px; line-height: 12px; }
.swrow { display: flex; margin-top: 5px; }
.sw { width: 11.500px; height: 12px; margin-right: 1px; flex: none; position: relative; overflow: hidden; }
.sw::after { content: ""; position: absolute; right: 0; bottom: 0; border-left: 4px solid transparent; border-bottom: 4px solid #fff; }
.sw.wht::after { border-bottom-color: #333; border-left-width: 3px; border-bottom-width: 3px; }
.pink { background: #e23fa0; }
.yel { background: #f6c51e; }
.ora { background: #e4532a; }
.blk { background: #000; }
.wht { background: #fff; }
.teal { background: #0f9b8e; }
.drk { background: #222; }
.mar { background: #a80d2f; }
.lime { background: #9ed05a; }
.sky { background: #4db8e0; }
.red { background: #c8102e; }
.navy { background: #1c4f96; }
.ctl { display: flex; margin-top: 7px; height: 43px; }
.ctl-left { width: 42px; display: flex; flex-direction: column; gap: 4px; padding-left: 1px; }
.ctl-mini { display: flex; gap: 6px; padding-left: 1px; height: 10px; }
.ctl-right { display: flex; flex-direction: column; padding-top: 2px; }
.tint { display: flex; align-items: center; height: 15px; }
.tint-t { width: 13px; color: #a9a9a7; }
.slider { width: 95px; height: 3px; background: linear-gradient(90deg, #fff, #e4532a); position: relative; }
.slider i { position: absolute; right: -3px; top: 1px; width: 7px; height: 6px; background: #cfcfcd; border-radius: 2px 2px 0 0; }
.tint-f { margin-left: 4px; width: 29px; height: 15px; padding-left: 4px; }
.tint-p { margin-left: 4px; color: #a9a9a7; }
.spot { display: flex; align-items: center; margin: 4px 0 0 8px; color: #a9a9a7; font-size: 9px; }
.spot-n { width: 105px; }
.spot-g { width: 9px; height: 10px; background: #8b8b89; }
.spot-c { width: 9px; height: 10px; margin-left: 10px; background: conic-gradient(#ff0 0 25%, #0ff 0 50%, #f0f 0 75%, #111 0); }
.nbw { display: flex; margin-top: 52px; }
.nbw i { width: 10px; height: 10px; margin-right: 1px; }
.nbw-n { background: linear-gradient(to top right, #fff 42%, #d01c2c 42%, #d01c2c 58%, #fff 58%); }
.nbw-b { background: #000; }
.nbw-w { background: #fff; }
.spectrum { margin: 14px 0 0 2px; height: 22px; width: 541px; background: linear-gradient(90deg, #fff, #e4532a); box-shadow: 0 0 0 1px #3a3a38; }

.pn-swatch { height: 157px; margin-bottom: 1px; }
.sw-top { display: flex; margin-top: 7px; height: 26px; }
.sw-grid { width: 17px; height: 17px; margin: 2px 0 0 6px; background: #4a4a48; display: flex; align-items: center; justify-content: center; }
.sw-grid svg { width: 12px; height: 12px; }
.lbl2 { margin-top: 3px; }
.lbl3 { margin-top: 11px; }
.tiles { display: flex; align-items: center; height: 11px; margin-top: 2px; padding-left: 1px; }
.lbl3 + .tiles { margin-top: 6px; }
.sw.sm { width: 11px; height: 11px; margin-right: .5px; }
.sw.cur { box-shadow: inset 0 0 0 1px #222; }
.fold { width: 11px; height: 11px; color: #bdbdbb; }
.iconbar { display: flex; align-items: center; color: #bdbdbb; height: 12px; }
.iconbar > svg, .ib-r svg { width: 12px; height: 12px; }
.ib-r { margin-left: auto; display: flex; align-items: center; gap: 10px; padding-right: 23px; }
.ib-sw { padding-left: 4px; margin-top: 3px; }
.ib-g2 { margin-left: 11px; }
.dim { opacity: .25; }

.pn-sym { height: 114px; }
.symlist { display: flex; margin-top: 7px; height: 65px; overflow: hidden; }
.symrows { width: 533px; }
.symrow { height: 27px; display: flex; align-items: center; color: #d2d2d0; }
.symrow.sel { background: #4f6887; color: #eef0f2; }
.symth { width: 26px; height: 24.500px; margin: 0 4px 0 5px; flex: none; display: flex; align-items: center; justify-content: center; border: 1px solid #c8c8c6; }
.symth i { width: 7px; height: 2px; background: #222; }
.th-w { background: #eeeeec; }
.th-y { background: #f6c51e; }
.th-r { background: #d63a2b; }
.sbar { width: 10px; margin-left: 1px; display: flex; flex-direction: column; align-items: center; color: #a9a9a7; flex: none; }
.s-a { width: 7px; height: 5px; }
.s-t { width: 8px; background: #5d5d5b; flex: 1; margin: 2px 0; }
.ib-sym { margin-top: 4px; padding-left: 4px; }

.pn-stroke { height: 26px; }
.pn-app { height: 106px; }
.applist { display: flex; margin-top: 5px; height: 62px; }
.approws { width: 533px; }
.approw { height: 21px; display: flex; align-items: center; padding-left: 42px; position: relative; color: #c8c8c6; }
.approw u { display: inline; }
.app-box { position: absolute; left: 3px; top: 2px; width: 15px; height: 15px; background: #fff; }
.app-eye { position: absolute; left: 4px; top: 7px; width: 12px; height: 8px; opacity: .25; }
.ib-app { padding-left: 5px; gap: 10px; margin-top: 2px; }
.fx { font: italic 11px "Liberation Serif", serif; color: #a9a9a7; margin-left: 0; }

.pn-layers { flex: 1; min-height: 0; }
.pn-layers .pb { padding-left: 0; height: 372px; }
.lsearch { display: flex; align-items: center; padding: 11px 0 0 11px; }
.lsearch-box { width: 511px; height: 16px; background: #474745; display: flex; align-items: center; padding-left: 5px; gap: 5px; color: #a9a9a7; font-size: 8px; }
.lsearch-box svg { width: 11px; height: 11px; }
.funnel { width: 11px; height: 11px; margin-left: 10px; color: #c8c8c6; }
.layerwrap { display: flex; margin-top: 12px; height: 314px; overflow: hidden; padding-left: 3px; }
.layers { width: 534px; position: relative; }
.lrow { height: 17.500px; display: flex; align-items: center; position: relative; color: #dadad8; }
.lrow.sel { background: #4f6887; color: #f0f0ee; }
.eye { width: 12px; height: 8px; margin-left: 4px; color: #c8c8c6; }
.gbar { width: 3px; height: 16px; margin-left: 21px; background: #55e855; }
.lchev { width: 8px; height: 5px; margin-left: 103px; color: #c4c4c2; }
.lchev.closed { transform: rotate(-90deg); }
.th { width: 14px; height: 14px; background: #fff; border: 1px solid #222; flex: none; }
.lrow.g .th { margin-left: 7px; }
.lrow.s .th { margin-left: 137px; }
.gt { background: linear-gradient(#fff 40%, #aaa 40% 60%, #fff 60%); }
.v1 { background: linear-gradient(90deg, #fff 40%, #d8d2b0 40% 50%, #fff 50% 60%, #d8d2b0 60% 68%, #fff 68%); }
.v2 { background: linear-gradient(90deg, #fff 40%, #ccc 40% 50%, #fff 50%); }
.h1 { background: linear-gradient(#fff 45%, #ccc 45% 55%, #fff 55%); }
.d1 { background: linear-gradient(#fff 55%, #333 55% 65%, #fff 65%); }
.lname { margin-left: 4px; flex: 1; }
.lrow.g .lname { margin-left: 4px; }
.circ { width: 7px; height: 7px; border-radius: 50%; border: 1px solid #b4b4b2; margin-right: 18px; flex: none; }
.circ.hov { background: #3a3a38; box-shadow: 0 0 0 3px #5e5e5c; }
.tgt { position: absolute; right: 8px; top: 6px; width: 5px; height: 5px; background: #3fe03f; outline: 1px solid #333; }
.tgt.big { width: 7px; height: 7px; top: 5px; right: 7px; outline-color: #fff3; }
.cursor { position: absolute; left: 506px; top: 200px; width: 14px; height: 18px; }
.sb-l { height: 100%; }
.st-lay { flex: none; height: 28px; margin-top: 60px; }
.sb-l .s-a { margin-top: auto; }
.lfoot { display: flex; align-items: center; height: 20px; padding-left: 4px; }
.lcount { color: #c0c0be; }
.lfoot .ib-r svg { width: 12px; height: 12px; }
.lfoot .ib-r { gap: 10px; }

/* floating transform panel */
.transform { position: absolute; left: 351px; top: 41px; width: 201px; height: 298px; background: #535351; border: 1px solid #3f3f3d; border-width: 1px 0 1px 1px; box-shadow: 0 1px 3px #0005; z-index: 4; display: flex; flex-direction: column; }
.tf-head { height: 25px; flex: none; background: #454543; display: flex; align-items: stretch; color: #b4b4b2; position: relative; overflow: hidden; }
.tf-tab { display: flex; align-items: center; }
.tf-tab.on { width: 64px; padding-left: 12px; background: #535351; color: #efefed; font-weight: 700; }
.t-a { margin-left: 7px; width: 20px; overflow: hidden; }
.t-p { margin-left: 7px; width: 20px; overflow: hidden; }
.t-r { margin-left: 7px; width: 21px; overflow: hidden; }
.tf-more { margin-left: 24px; display: flex; align-items: center; font-size: 11px; }
.tf-bar { width: 1px; height: 10px; margin: auto 5px auto 6px; background: #999; }
.tf-menu { width: 9px; height: 8px; margin: auto 0; color: #c4c4c2; }
.tf-grid { display: flex; align-items: center; margin-top: 6px; padding-left: 5px; }
.tf-ref { width: 17px; height: 17px; color: #e4e4e2; }
.tf-fields { margin-left: 5px; display: flex; flex-direction: column; gap: 6px; }
.tf-row { display: flex; align-items: center; }
.tf-l { width: 8px; color: #a9a9a7; margin-left: 8px; }
.tf-l.l2 { margin-left: 9px; width: 9px; }
.tf-f { width: 54px; height: 16px; padding-left: 4px; }
.tf-link { width: 12px; height: 14px; margin-left: 8px; color: #c4c4c2; }
.tf-ang { margin: 4px 0 0 27px; }
.tf-ai { width: 14px; height: 12px; color: #bdbdbb; margin-right: 3px; }
.tf-ai.a2 { width: 10px; height: 12px; margin-left: 7px; margin-right: 7px; }
.tf-s { width: 34px; height: 16px; padding-left: 3px; }
.tf-s.s2 { width: 30px; }
.tf-dd { width: 15px; height: 16px; background: #4a4a48; display: flex; align-items: center; justify-content: center; margin-left: 1px; }
.tf-turn { margin: 6px 0 0 43px; width: 124px; height: 18px; border: 1px solid #666664; display: flex; align-items: center; justify-content: center; gap: 5px; color: #dcdcda; }
.tf-turn svg { width: 11px; height: 11px; }
.tf-none { text-align: center; margin-top: 70px; color: #70706e; font-size: 8.500px; padding-bottom: 70px; }
.tf-chk { display: flex; align-items: center; gap: 4px; margin-left: 6px; height: 17px; color: #dcdcda; }
.tf-chk i { width: 10px; height: 10px; background: #b9b9b7; border-radius: 1px; position: relative; }
.tf-chk i::after { content: ""; position: absolute; left: 3px; top: 1px; width: 3px; height: 6px; border: solid #444; border-width: 0 1.500px 1.500px 0; transform: rotate(40deg); }

/* right icon strip */
.strip { width: 34px; flex: none; background: #535351; display: flex; flex-direction: column; align-items: center; border-left: 1px solid #454543; }
.strip-top { width: 100%; height: 42px; background: #4c4c4a; display: flex; align-items: center; justify-content: center; border-bottom: 1px solid #454543; padding-top: 14px; }
.strip-top svg { width: 15px; height: 16px; }
.strip-sec { width: 100%; height: 106px; display: flex; flex-direction: column; align-items: center; gap: 9px; padding-top: 11px; background: #4c4c4a; border-bottom: 1px solid #454543; }
.strip-on { width: 16px; height: 18px; background: #3a3a38; display: flex; align-items: center; justify-content: center; }
.strip-on svg { width: 14px; height: 14px; }
.st { width: 14px; height: 14px; color: #bdbdbb; }
```
